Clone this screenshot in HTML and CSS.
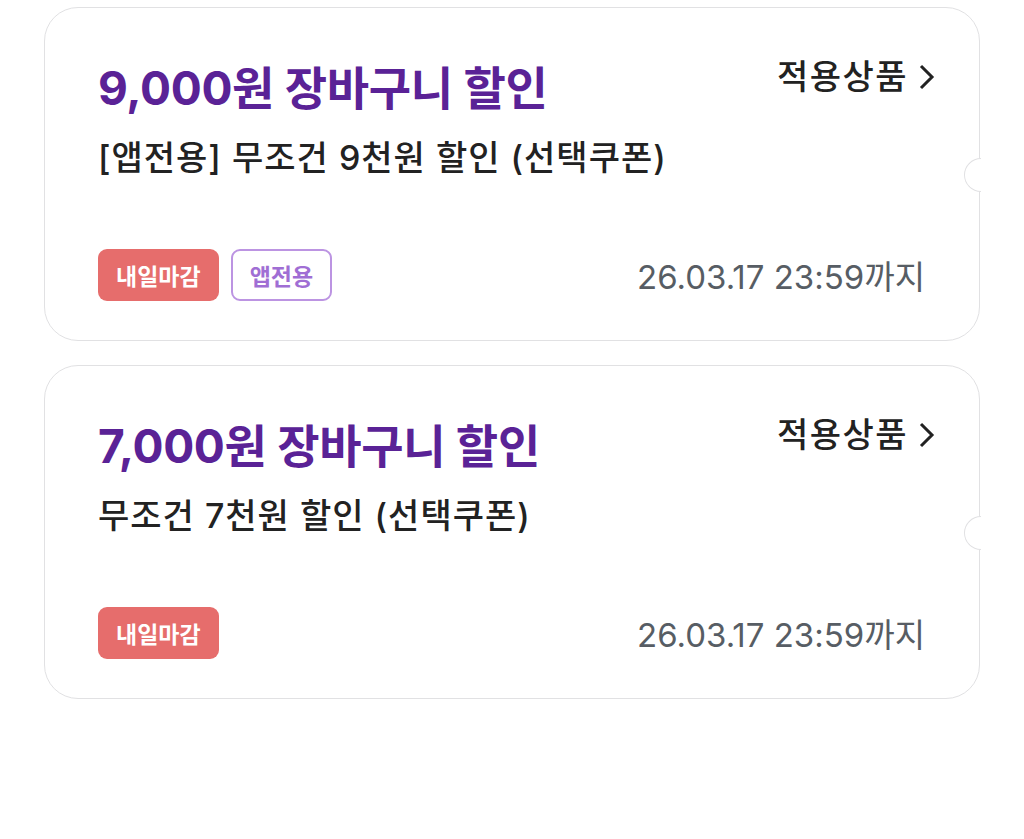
FILE: index.html
```html
<html>
 <head>
 <meta content="width=device-width, initial-scale=1" name="viewport" />
  <link rel="stylesheet" href="styles.css">
 </head>
 <body>
 <div id='list'>
  <div class='coupon'>
   <div class='top'>
    <div class='info'>
     <div class='amount'>9,000원 장바구니 할인</div>
     <div class='name'>[앱전용] 무조건 9천원 할인 (선택쿠폰)</div>
    </div>
    <div class='goods'>적용상품
     <svg width="17" height="28" viewBox="0 0 17 28"><path d="M3 3 L14 14 L3 25" fill="none" stroke="#222" stroke-width="3"/></svg>
    </div>
   </div>
   <div class='bottom'>
    <div class='tags'>
     <span class='tag due'>내일마감</span>
     <span class='tag app'>앱전용</span>
    </div>
    <div class='date'>26.03.17 23:59까지</div>
   </div>
   <div class='notch'></div>
  </div>
  <div class='coupon'>
   <div class='top'>
    <div class='info'>
     <div class='amount'>7,000원 장바구니 할인</div>
     <div class='name'>무조건 7천원 할인 (선택쿠폰)</div>
    </div>
    <div class='goods'>적용상품
     <svg width="17" height="28" viewBox="0 0 17 28"><path d="M3 3 L14 14 L3 25" fill="none" stroke="#222" stroke-width="3"/></svg>
    </div>
   </div>
   <div class='bottom'>
    <div class='tags'>
     <span class='tag due'>내일마감</span>
    </div>
    <div class='date'>26.03.17 23:59까지</div>
   </div>
   <div class='notch'></div>
  </div>
 </div>
 </body>
</html>
```

FILE: styles.css
```css
body{
  background-color: #fff;
  margin:0;
  padding:0;
  font-family: Inter, "Noto Sans CJK KR", sans-serif;
}
#list{
  padding: 7px 44px;
  display: flex;
  flex-direction: column;
  gap: 24px;
}
.coupon{
  position: relative;
  height: 334px;
  box-sizing: border-box;
  border: 1.5px solid #e1e1e3;
  border-radius: 34px;
  padding: 50px 44px 39px 53px;
  display: flex;
  flex-direction: column;
}
.top{
  display: flex;
  justify-content: space-between;
  align-items: flex-start;
}
.amount{
  color: #5a2296;
  font-size: 46px;
  font-weight: 700;
  line-height: 60px;
  letter-spacing: -0.3px;
}
.name{
  color: #222;
  font-size: 34px;
  font-weight: 500;
  line-height: 44px;
  letter-spacing: 1px;
  margin-top: 18px;
}
.goods{
  color: #222;
  font-size: 34px;
  font-weight: 500;
  letter-spacing: 1.5px;
  display: flex;
  align-items: center;
  gap: 10px;
  line-height: 44px;
  margin-top: -3px;
}
.bottom{
  margin-top: auto;
  display: flex;
  justify-content: space-between;
  align-items: center;
}
.tags{
  display: flex;
  gap: 12px;
}
.tag{
  height: 52px;
  box-sizing: border-box;
  border-radius: 9px;
  font-size: 23px;
  font-weight: 600;
  display: flex;
  align-items: center;
  padding: 0 18px;
}
.due{
  background-color: #e66d6c;
  color: #fff;
}
.app{
  border: 2px solid #bc94e2;
  color: #a06ed4;
  padding: 0 17px;
}
.date{
  color: #575d64;
  font-size: 33px;
  margin-right: 10px;
}
.notch{
  position: absolute;
  right: -1.5px;
  top: 150px;
  width: 17px;
  height: 34px;
  box-sizing: border-box;
  background: #fff;
  border: 1.5px solid #e1e1e3;
  border-right: none;
  border-radius: 17px 0 0 17px;
}
```
